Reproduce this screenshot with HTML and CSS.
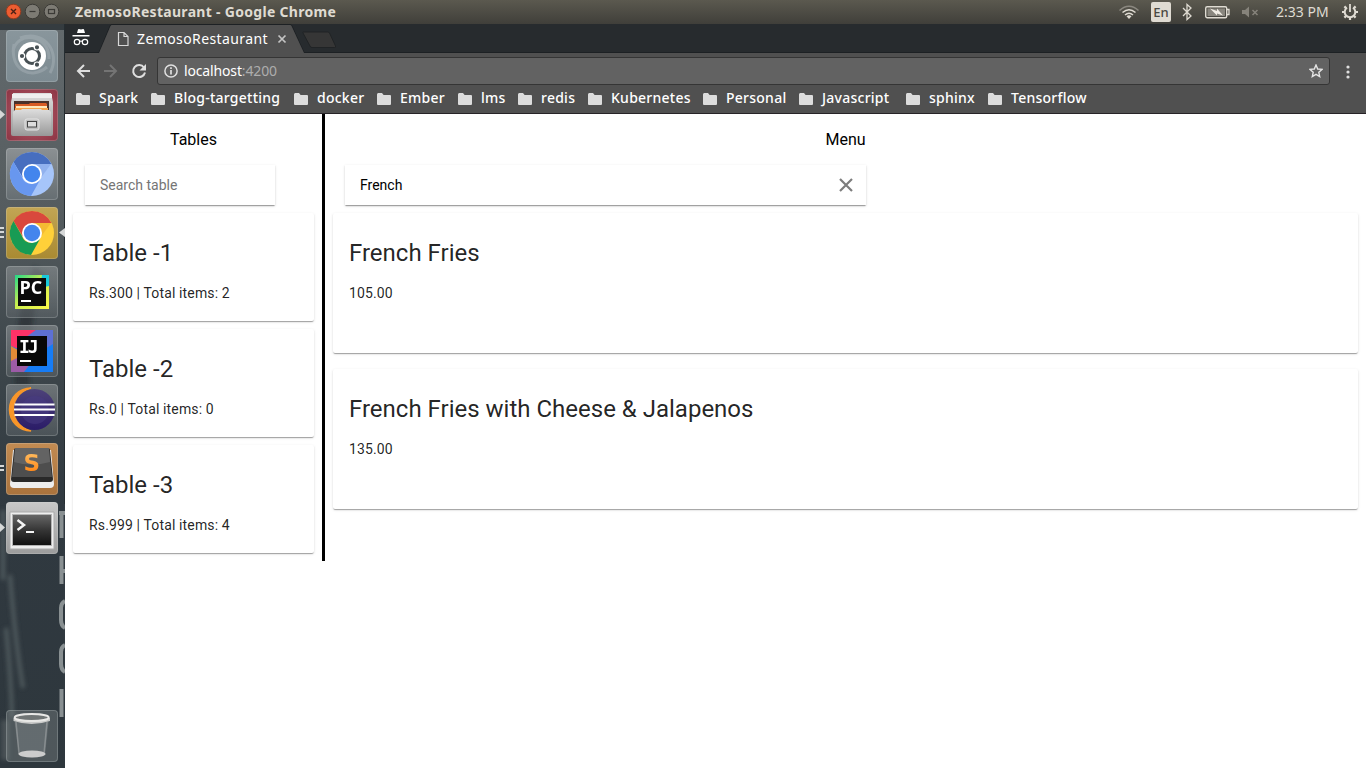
FILE: index.html
```html
<!DOCTYPE html>
<html lang="en">
<head>
<meta charset="utf-8">
<title>ZemosoRestaurant</title>
<link rel="stylesheet" href="styles.css">
</head>
<body>
<svg width="0" height="0" class="defs">
  <defs>
    <linearGradient id="paper" x2="0" y2="1"><stop stop-color="#dedede"/><stop offset="1" stop-color="#989898"/></linearGradient>
    <linearGradient id="dark" x2="0" y2="1"><stop stop-color="#666"/><stop offset=".5" stop-color="#363636"/><stop offset="1" stop-color="#111"/></linearGradient>
    <linearGradient id="pc" x2="1" y2="1"><stop stop-color="#21d789"/><stop offset=".45" stop-color="#c8ee50"/><stop offset="1" stop-color="#fcf84a"/></linearGradient>
    <linearGradient id="orange" x2="0" y2="1"><stop stop-color="#ffc56b"/><stop offset="1" stop-color="#ff7d0a"/></linearGradient>
    <linearGradient id="violet" x2="0" y2="1"><stop stop-color="#4d4279"/><stop offset="1" stop-color="#2b1c68"/></linearGradient>
    <symbol id="folder" viewBox="0 0 14 12"><path d="M0 1.500Q0 0 1.200 0H5l1.600 2H13q1 0 1 1v8q0 1-1 1H1q-1 0-1-1z" fill="#dcdcdc"/></symbol>
  </defs>
</svg>

<header class="panel">
  <div class="controls">
    <svg width="60" height="24" viewBox="0 0 60 24" fill="none">
      <circle cx="13.500" cy="11.500" r="7.300" fill="#ed5d31" stroke="#963c20"/><path d="M11 9l5 5m0-5l-5 5" stroke="#4b2115" stroke-width="1.400"/>
      <circle cx="32.500" cy="11.500" r="7.300" fill="#7d7b74" stroke="#3b3a36"/><path d="M29.500 11.500h6" stroke="#3b3a36" stroke-width="1.200"/>
      <circle cx="51.500" cy="11.500" r="7.300" fill="#7d7b74" stroke="#3b3a36"/><rect x="48.500" y="9.500" width="6" height="4" stroke="#3b3a36" stroke-width="1.200"/>
    </svg>
  </div>
  <span class="window-title">ZemosoRestaurant - Google Chrome</span>
  <div class="indicators">
    <svg width="20" height="24" viewBox="0 0 20 24" fill="none" stroke="#dfdbd2" stroke-width="1.500"><path d="M.5 10.500q9.500-8.500 19 0" stroke="#8b8880"/><path d="M3.500 12.500q6.500-5.500 13 0M6 15q4-3.500 8 0"/><path d="M7.500 16.200q2.500-2 5 0L10 19z" fill="#dfdbd2" stroke="none"/></svg>
    <span class="lang">En</span>
    <svg class="bt" width="12" height="24" viewBox="0 0 12 24" fill="none" stroke="#dfdbd2" stroke-width="1.300"><path d="M2 8l8 8-4 3.500v-15L10 8l-8 8"/></svg>
    <svg class="battery" width="26" height="24" viewBox="0 0 26 24"><rect x=".700" y="6.700" width="21" height="11" rx="1.500" fill="none" stroke="#dfdbd2" stroke-width="1.400"/><rect x="2.500" y="8.500" width="17.500" height="7.500" fill="#89867e"/><path d="M22 9.500h2v5h-2" fill="none" stroke="#dfdbd2" stroke-width="1.300"/><path d="M5 8.500l7 2.500V8.500l6 7-6-2v2z" fill="#f0ece4"/></svg>
    <svg class="sound" width="20" height="24" viewBox="0 0 20 24"><path d="M1 10h3l4-3.500v11L4 14H1z" fill="#86837b"/><path d="M11.500 10l5 5m0-5l-5 5" stroke="#86837b" stroke-width="1.500"/></svg>
    <span class="clock">2:33 PM</span>
    <svg width="18" height="24" viewBox="0 0 18 24" fill="none" stroke="#dfdbd2"><path d="M6 7.600A5.300 5.300 0 1 0 12 7.600" stroke-width="2"/><path d="M9 4v8" stroke-width="1.800"/><path d="M1 12h2m12 0h2M9 18v2M3.400 6.400l1.600 1.600m8 0l1.600-1.600M3.400 17.600L5 16m8 0l1.600 1.600" stroke-width="2.200"/></svg>
  </div>
</header>

<div class="desktop">
  <nav class="dock">
    <svg class="backdrop" width="65" height="744" viewBox="0 24 65 744">
      <defs><linearGradient id="wall" x2="0" y2="1"><stop stop-color="#636a6d"/><stop offset=".25" stop-color="#555c5f"/><stop offset=".45" stop-color="#3d464b"/><stop offset=".65" stop-color="#303940"/><stop offset="1" stop-color="#2e373d"/></linearGradient><filter id="soft" x="-50%" width="200%"><feGaussianBlur stdDeviation="2"/></filter></defs>
      <path d="M0 24h65v744H0z" fill="url(#wall)"/><path d="M0 24h65v6H0z" fill="#22292d" opacity=".7"/>
      <g filter="url(#soft)" fill="none" stroke="#7b8484"><path d="M40 270Q22 305 22 385" stroke="#262e33" stroke-width="14" opacity=".7"/><path d="M3 510v70M10 575q5 65 13 113M6 628q5 50 6 90" stroke-width="4" opacity=".45"/><path d="M5 720v40" stroke-width="8" opacity=".35"/></g>
      <path d="M61.500 513v25m0 18v28M65 601q-4 2-4 7v12q0 6 4 8M65 645q-4 2-4 7v12q0 6 4 8M61.500 689v28M59 513h6M61 571h4" stroke="#899092" stroke-width="4" fill="none"/>
      <path d="M64.500 24v480" stroke="#252d31"/>
      <g fill="#d6d8d8"><path d="M0 110l5 4.500-5 4.500zM0 523l5 4.500-5 4.500zM65 228v9l-6-4.500z"/><path d="M0 227h4v2H0zm0 4h4v2H0zm0 5h4v2H0zM0 465h4v2H0zm0 4h4v2H0z"/></g>
    </svg>
    <div class="apps">
      <div class="tile ubuntu"><svg viewBox="0 0 52 52" fill="none"><path d="M7 22C10 0 44 4 43 29M8 14c-5 27 18 36 33 23M14 8c25-9 41 15 30 35" stroke="#b0b9bd" stroke-width="3" opacity=".4"/><circle cx="26" cy="26" r="14" fill="#fff"/><circle cx="26" cy="26" r="7.500" stroke="#475054" stroke-width="3"/><g fill="#475054" stroke="#fff" stroke-width="1.200"><circle cx="16" cy="26" r="2.700"/><circle cx="31" cy="17.300" r="2.700"/><circle cx="31" cy="34.700" r="2.700"/></g></svg></div>
      <div class="tile files"><svg viewBox="0 0 52 52"><path d="M7 4h38l2 9v32q0 2-2 2H7q-2 0-2-2V13z" fill="url(#paper)"/><path d="M6 5h40v4H6z" fill="#efefef"/><path d="M8 12h35v11H8z" fill="#4a302a"/><path d="M9 15h14l1-1h16l1 1v7H9z" fill="#d85b25"/><path d="M10 17h31v2H10z" fill="#ffe7ba"/><path d="M9 19h33v4H9z" fill="#f5a34f"/><path d="M7 23l2-2h6l1-1h19l1 1h7l2 2v24H7z" fill="url(#paper)"/><rect x="19" y="30" width="14" height="11" rx="2" fill="#bdbdbd" stroke="#e5e5e5"/><rect x="21.500" y="32.500" width="9" height="5.500" fill="#ddd" stroke="#444"/></svg></div>
      <div class="tile chromium"><svg viewBox="0 0 52 52"><circle cx="26" cy="26" r="22" fill="#a6c5fa"/><path d="M26 4A22 22 0 0 1 45.500 16H26L17 30 7.500 14A22 22 0 0 1 26 4" fill="#476ebf"/><path d="M7.500 14A22 22 0 0 0 25 48L34 32l-8 4q-8 0-10-7z" fill="#6897ef"/><path d="M34 31l11-15H26z" fill="#7b9ee2" opacity=".5"/><circle cx="26" cy="26" r="10" fill="#fff"/><circle cx="26" cy="26" r="8.200" fill="#4385ed"/></svg></div>
      <div class="tile chrome"><svg viewBox="0 0 52 52"><circle cx="26" cy="26" r="22" fill="#ffd039"/><path d="M26 4A22 22 0 0 1 45.500 16H26L17 30 7.500 14A22 22 0 0 1 26 4" fill="#d9483d"/><path d="M7.500 14A22 22 0 0 0 25 48L34 32l-8 4q-8 0-10-7z" fill="#189b54"/><path d="M34 31l11-15H26z" fill="#d98b28" opacity=".3"/><circle cx="26" cy="26" r="10" fill="#fff"/><circle cx="26" cy="26" r="8.200" fill="#4385ed"/></svg></div>
      <div class="tile"><svg viewBox="0 0 52 52"><path d="M9 9h34v34H9z" fill="url(#pc)"/><path d="M36 9h7v11l-9 2z" fill="#18c9dc"/><path d="M12 12h28v28H12z" fill="#0b0b0b"/><text x="13.500" y="28" class="logo">PC</text><path d="M15 34h10v2H15z" fill="#fff"/></svg></div>
      <div class="tile"><svg viewBox="0 0 52 52"><path d="M5 5h42v42H5z" fill="#167cf5"/><path d="M5 5h25L15 25 5 21z" fill="#fe3267"/><path d="M30 5h17v14L34 27 20 12z" fill="#5d70d3"/><path d="M5 21l12 7-5 18H5z" fill="#e38b37"/><path d="M5 36l8-4 12 6-7 9H5z" fill="#9c5ba7"/><path d="M11 11h30v30H11z" fill="#080808"/><text x="13" y="27.500" class="logo mono">IJ</text><path d="M14 35h11v2H14z" fill="#fff"/></svg></div>
      <div class="tile"><svg viewBox="0 0 52 52"><path d="M25 4A21.500 21.500 0 0 0 25 47Q9 42 9 25T25 4" fill="#f89629" stroke="#f89629" stroke-width="1.500"/><circle cx="28.500" cy="25.500" r="20.500" fill="url(#violet)"/><circle cx="29" cy="26" r="14" fill="#483c84" opacity=".5"/><path d="M8.500 20.500h40M8 25.500h41M8.500 31h40" stroke="#fff" stroke-width="2.200"/></svg></div>
      <div class="tile sublime"><svg viewBox="0 0 52 52"><path d="M7 7L4 41q0 4 4 4h36q4 0 4-4L45 7z" fill="#eee"/><path d="M8 7q0-2 3-2h30q3 0 3 2l3 29q0 3-3 3H8q-3 0-3-3z" fill="#292929"/><path d="M9 5h34l3 29H6z" fill="#4e4e4e"/><path d="M9 5h34l1 14Q25 24 8 19z" fill="#858585" opacity=".4"/><text x="17.500" y="27.500" class="sublime-letter">S</text></svg></div>
      <div class="tile terminal"><svg viewBox="0 0 52 52"><path d="M4 10h44v37H4z" fill="#eee" stroke="#aaa"/><path d="M6 12h40v32H6z" fill="#b3b3b3"/><path d="M7 13h38v30H7z" fill="url(#dark)"/><path d="M11.500 18l6.500 5-6.500 5" fill="none" stroke="#f4f4f4" stroke-width="2.500"/><path d="M20 30h8" stroke="#f4f4f4" stroke-width="2"/></svg></div>
    </div>
    <div class="tile trash"><svg viewBox="0 0 52 52"><path d="M8 8h35l-4 37q-13 5-26 0z" fill="#ddd" opacity=".15"/><path d="M10 12l3 32M41 12l-3 32" stroke="#ddd" opacity=".3" stroke-width="1.500"/><ellipse cx="26" cy="44" rx="13.500" ry="3.500" fill="#ccc"/><path d="M7.500 8v3q18 6 36.500 0V8" fill="#c9cac9"/><ellipse cx="25.700" cy="7.500" rx="17" ry="3.500" fill="#707575" stroke="#e8e8e6" stroke-width="2"/></svg></div>
  </nav>

  <div class="browser">
    <div class="tabs">
      <svg class="tab-shapes" width="1301" height="29" viewBox="65 24 1301 29">
        <path d="M65 52.500H99L110 26q.6-1.500 2-1.500H290q1.500 0 2 1.500l12 26.500H1366" fill="none" stroke="#1d2124"/>
        <path d="M99 53l11.500-27q.5-1 1.500-1H290q1 0 1.500 1L304 53z" fill="#505050"/>
        <path d="M303.500 32h24q1.500 0 2 1l6 13q.5 1.500-1 1.500H312q-1.500 0-2-1.500l-7-13q-.5-1 .5-1z" fill="#363636" stroke="#202325"/>
        <g fill="#fff"><path d="M77 33l1-3.500q.300-.7 1-.5l2 .4 2-.4q.7-.2 1 .5l1 3.500z"/><path d="M72.500 35h17v1.500h-17z"/></g><g fill="none" stroke="#fff" stroke-width="1.200"><circle cx="77" cy="42" r="2.700"/><circle cx="85" cy="42" r="2.700"/><path d="M79.500 41.500q1.500-1 3 0"/></g>
        <path d="M118.500 32.500h5.500l4 4v9h-9.500zM124 32.500v4h4" fill="none" stroke="#d8d8d8" stroke-width="1.200"/>
        <path d="M278.500 35.500l7 7m0-7l-7 7" stroke="#c4c4c4" stroke-width="1.700"/>
      </svg>
      <span class="tab-title">ZemosoRestaurant</span>
    </div>
    <div class="toolbar">
      <svg width="92" height="32" viewBox="65 55 92 32" fill="none" stroke="#dedede" stroke-width="2"><path d="M90 71H78m6-6l-6 6 6 6"/><path d="M104 71h12m-6-6l6 6-6 6" stroke="#747474"/><path d="M144 67.500A6 6 0 1 0 145 72.500"/><path d="M146 64v6.500h-6.500z" fill="#dedede" stroke="none"/></svg>
      <div class="address">
        <svg width="14" height="14" viewBox="0 0 14 14" fill="none" stroke="#e0e0e0"><circle cx="7" cy="7" r="6.100" stroke-width="1.500"/><path d="M7 6v4.500M7 3.300V5" stroke-width="1.700"/></svg>
        <span class="url">localhost<span class="port">:4200</span></span>
        <svg class="star" width="14" height="14" viewBox="0 0 14 14"><path d="M7 1l1.700 4 4.300.4-3.200 2.900.9 4.200L7 10.300l-3.700 2.200.9-4.200L1 5.400 5.300 5z" fill="none" stroke="#e4e4e4" stroke-width="1.400"/></svg>
      </div>
      <svg class="more" width="4" height="14" viewBox="0 0 4 14" fill="#dedede"><circle cx="2" cy="2" r="1.600"/><circle cx="2" cy="7" r="1.600"/><circle cx="2" cy="12" r="1.600"/></svg>
    </div>
    <div class="bookmarks">
      <div class="w75"><svg><use href="#folder"/></svg><span>Spark</span></div>
      <div class="w143"><svg><use href="#folder"/></svg><span>Blog-targetting</span></div>
      <div class="w83"><svg><use href="#folder"/></svg><span>docker</span></div>
      <div class="w81"><svg><use href="#folder"/></svg><span>Ember</span></div>
      <div class="w60"><svg><use href="#folder"/></svg><span>lms</span></div>
      <div class="w70"><svg><use href="#folder"/></svg><span>redis</span></div>
      <div class="w115"><svg><use href="#folder"/></svg><span>Kubernetes</span></div>
      <div class="w96"><svg><use href="#folder"/></svg><span>Personal</span></div>
      <div class="w107"><svg><use href="#folder"/></svg><span>Javascript</span></div>
      <div class="w82"><svg><use href="#folder"/></svg><span>sphinx</span></div>
      <div class="w115"><svg><use href="#folder"/></svg><span>Tensorflow</span></div>
    </div>

    <main class="page">
      <section class="tables">
        <h1>Tables</h1>
        <div class="search"><span class="placeholder">Search table</span></div>
        <article class="card"><h2>Table -1</h2><p>Rs.300 | Total items: 2</p></article>
        <article class="card"><h2>Table -2</h2><p>Rs.0 | Total items: 0</p></article>
        <article class="card"><h2>Table -3</h2><p>Rs.999 | Total items: 4</p></article>
      </section>
      <section class="menu">
        <h1>Menu</h1>
        <div class="search"><span>French</span><svg width="14" height="14" viewBox="0 0 14 14"><path d="M1 1l12 12M13 1L1 13" stroke="#7d7d7d" stroke-width="2.200"/></svg></div>
        <article class="card"><h2>French Fries</h2><p>105.00</p></article>
        <article class="card"><h2>French Fries with Cheese &amp; Jalapenos</h2><p>135.00</p></article>
      </section>
    </main>
  </div>
</div>
</body>
</html>
```
FILE: styles.css
```css
* { box-sizing: border-box; }
body { margin: 0; width: 1366px; height: 768px; overflow: hidden; background: #fff; font-family: "Noto Sans", sans-serif; }
svg { display: block; flex: none; }
.defs { position: absolute; }

.panel { height: 24px; display: flex; align-items: center; background: linear-gradient(#5b594f, #403f3a); color: #dfdbd2; }
.controls { width: 75px; }
.window-title { font-size: 14px; font-weight: 700; line-height: 24px; letter-spacing: .3px; white-space: nowrap; }
.indicators { margin-left: auto; display: flex; align-items: center; padding-right: 7px; }
.lang { width: 20px; height: 20px; margin-left: 12px; border-radius: 2px; background: #dfdbd2; color: #4a4843; font-size: 13px; font-weight: 500; line-height: 21px; text-align: center; }
.bt { margin-left: 10px; }
.battery { margin-left: 12px; }
.sound { margin-left: 10px; }
.clock { width: 54px; margin: 0 11px 0 15px; font-size: 14px; line-height: 20px; padding-bottom: 1px; white-space: nowrap; }

.desktop { display: flex; height: 744px; }
.dock { position: relative; width: 65px; display: flex; flex-direction: column; justify-content: space-between; padding: 6px; }
.backdrop { position: absolute; left: 0; top: 0; }
.apps { display: flex; flex-direction: column; gap: 7px; }
.tile { position: relative; width: 52px; height: 52px; border-radius: 4px; background: linear-gradient(rgba(150, 155, 157, .55), rgba(100, 107, 111, .45)); box-shadow: inset 0 0 0 1px rgba(210, 215, 217, .25); }
.tile svg { width: 52px; height: 52px; }
.ubuntu { background: linear-gradient(#89969c, #7d8b92); }
.files { background: radial-gradient(#b65d6c, #8c3443); }
.chromium { background: linear-gradient(#8b9093, #666e72); }
.chrome { background: linear-gradient(#c2a554, #a98a32); }
.sublime { background: linear-gradient(#c28b52, #aa733d); }
.terminal { background: linear-gradient(#c8c8c8, #9c9c9c); }
.trash { background: rgba(140, 148, 150, .35); }
.logo { font: 700 18px "Open Sans", sans-serif; fill: #fff; }
.mono { font: 700 18px "DejaVu Sans Mono", monospace; letter-spacing: -2px; }
.sublime-letter { font: 700 23px "DejaVu Sans", sans-serif; fill: url(#orange); }

.browser { width: 1301px; }
.tabs { position: relative; height: 29px; background: #272b2e; }
.tab-title { position: absolute; left: 72px; top: 5px; color: #fff; font-size: 14px; line-height: 20px; letter-spacing: .4px; }
.toolbar { height: 32px; padding-top: 4px; display: flex; align-items: flex-start; background: #505050; }
.toolbar > svg:first-child { margin-top: -2px; }
.address { width: 1173px; height: 28px; display: flex; align-items: center; padding: 0 6px; border: 1px solid #353535; border-radius: 3px; background: #626262; }
.url { margin-left: 6px; padding-bottom: 2px; color: #fff; font-size: 14px; letter-spacing: -.15px; }
.port { color: #adadad; }
.star { margin-left: auto; }
.more { margin: 8px 0 0 16px; }
.bookmarks { height: 29px; display: flex; align-items: center; padding-left: 11px; border-bottom: 1px solid #272327; background: #505050; color: #fff; }
.bookmarks div { display: flex; align-items: center; gap: 9px; font-size: 14px; font-weight: 500; letter-spacing: .25px; white-space: nowrap; }
.bookmarks span { line-height: 20px; padding-bottom: 2px; }
.bookmarks svg { width: 14px; height: 12px; }
.w75 { width: 75px; }
.w143 { width: 143px; }
.w83 { width: 83px; }
.w81 { width: 81px; }
.w60 { width: 60px; }
.w70 { width: 70px; }
.w115 { width: 115px; }
.w96 { width: 96px; }
.w107 { width: 107px; }
.w82 { width: 82px; }

.page { display: flex; align-items: flex-start; font-family: Roboto, sans-serif; }
.tables { width: 260px; height: 447px; padding: 0 8px; border-right: 3px solid #000; }
.menu { flex: 1; padding: 0 8px; }
h1 { margin: 16px 0; font-size: 16px; font-weight: 400; line-height: 19px; text-align: center; }
.search { height: 40px; margin: 0 0 8px 12px; padding: 0 13px 0 15px; display: flex; align-items: center; justify-content: space-between; font-size: 14px; box-shadow: 0 2px 1px -1px rgba(0, 0, 0, .2), 0 1px 1px rgba(0, 0, 0, .14), 0 1px 3px rgba(0, 0, 0, .12); }
.tables .search { width: 190px; }
.menu .search { width: 521px; }
.placeholder { color: #757575; }
.card { height: 108px; margin-bottom: 8px; padding: 24px 16px; border-radius: 2px; color: rgba(0, 0, 0, .87); box-shadow: 0 2px 1px -1px rgba(0, 0, 0, .2), 0 1px 1px rgba(0, 0, 0, .14), 0 1px 3px rgba(0, 0, 0, .12); }
.menu .card { height: 140px; margin-bottom: 16px; }
h2 { margin: 0 0 16px; font-size: 24px; font-weight: 400; line-height: 32px; }
p { margin: 0; font-size: 14px; line-height: 16px; letter-spacing: .14px; }
```
